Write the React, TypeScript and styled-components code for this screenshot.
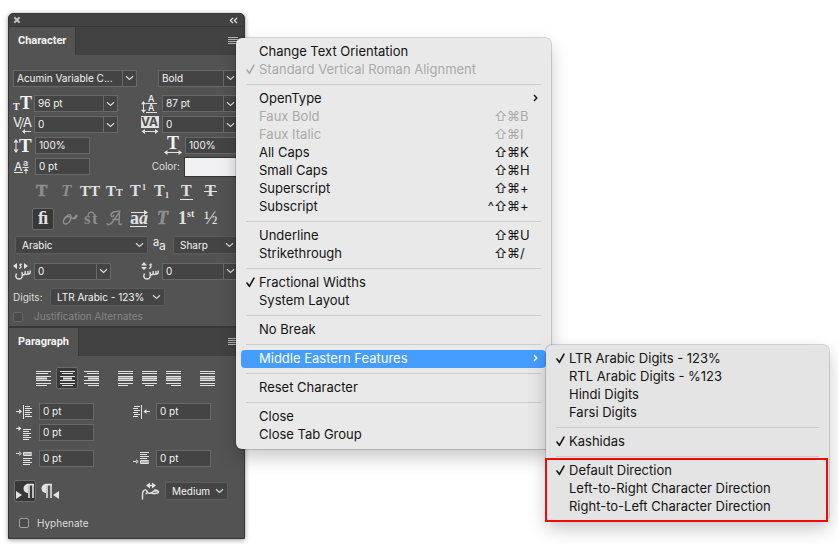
import React from "react";
import styled, { createGlobalStyle, css } from "styled-components";

const sans = `Inter, "Liberation Sans", sans-serif`;
const serif = `"Liberation Serif", serif`;
const ink = "#e2e2e2";
const dim = "#8e8e8e";

const GlobalStyle = createGlobalStyle`
  *, *::before, *::after { box-sizing: border-box; }
  body { margin: 0; background: #fff; font-family: ${sans}; }
  button, input, select { font: inherit; color: inherit; margin: 0; }
  svg { display: block; flex: none; overflow: visible; }
`;

const Page = styled.main`
  padding: 13px 8px 5px;
`;

const Dock = styled.div`
  position: relative;
  width: 28%;
  min-width: 237px;
  border: 1px solid #353535;
  border-radius: 5px 5px 0 0;
  background: #535353;
  color: #f4f4f4;
  font-size: 10px;
  line-height: 15px;
  box-shadow: 0 1px 5px rgba(0, 0, 0, 0.4);
`;

const TitleBar = styled.header`
  display: flex;
  align-items: center;
  justify-content: space-between;
  height: 13px;
  padding: 0 6px 0 4px;
  background: #424242;
  border-bottom: 1px solid #383838;
  border-radius: 4px 4px 0 0;
`;

const BareButton = styled.button`
  display: flex;
  padding: 0;
  border: 0;
  background: none;
`;

const Panel = styled.section`
  & + & { border-top: 2px solid #383838; }
`;

const TabRow = styled.div`
  display: flex;
  align-items: center;
  justify-content: space-between;
  height: 28px;
  padding-right: 6px;
  background: #424242;
`;

const Tab = styled.h2`
  align-self: stretch;
  display: flex;
  align-items: center;
  margin: 0;
  padding: 0 9px 1px;
  border-right: 1px solid #3a3a3a;
  background: #535353;
  font: 700 11px/15px Roboto, sans-serif;
`;

const CharacterBody = styled.div`
  padding: 10px 6px 3px 4px;
`;

const ParagraphBody = styled.div`
  padding: 8px 6px 5px 7px;
`;

const Row = styled.div<{ $h: number; $mt?: number; $split?: number; $pad?: number }>`
  display: ${(p) => (p.$split ? "grid" : "flex")};
  grid-template-columns: ${(p) => p.$split}px 1fr;
  align-items: center;
  height: ${(p) => p.$h}px;
  margin-top: ${(p) => p.$mt ?? 0}px;
  padding-left: ${(p) => p.$pad ?? 0}px;
`;

const Cell = styled.div<{ $lead: number; $end?: boolean }>`
  display: grid;
  grid-template-columns: ${(p) => p.$lead}px minmax(0, 1fr);
  align-items: center;
  & > :first-child { justify-self: ${(p) => (p.$end ? "end" : "start")}; }
`;

const Box = styled.span<{ $w?: number }>`
  display: flex;
  width: ${(p) => (p.$w ? `${p.$w}px` : "auto")};
  height: 17px;
  border: 1px solid #686868;
  background: #444;
`;

const TextInput = styled.input`
  flex: 1;
  min-width: 0;
  width: 100%;
  padding: 0 3px;
  border: 0;
  background: none;
  line-height: 15px;
`;

const DropButton = styled(BareButton)`
  align-items: center;
  justify-content: center;
  width: 14px;
  border-left: 1px solid #686868;
`;

const SelectBox = styled.span<{ $w?: number }>`
  display: grid;
  align-items: center;
  width: ${(p) => (p.$w ? `${p.$w}px` : "auto")};
  height: 18px;
  border: 1px solid #5c5c5c;
  border-radius: 2px;
  background: #444;
  & > * { grid-area: 1 / 1; }
  & > svg { justify-self: end; margin-right: 3px; pointer-events: none; }
`;

const NativeSelect = styled.select`
  appearance: none;
  width: 100%;
  height: 16px;
  padding: 0 0 0 6px;
  border: 0;
  background: none;
  line-height: 16px;
`;

const Label = styled.label<{ $off?: boolean }>`
  color: ${(p) => (p.$off ? "#858585" : "#dcdcdc")};
`;

const ColorLabel = styled(Label)`
  padding-right: 4px;
`;

const Swatch = styled.button`
  height: 20px;
  padding: 0;
  border: 1px solid #333;
  background: #f1f1f4;
`;

const CheckInput = styled.input<{ $off?: boolean }>`
  appearance: none;
  width: 10px;
  height: 10px;
  border: 1px solid ${(p) => (p.$off ? "#666" : "#a0a0a0")};
  border-radius: 2px;
  background: #4a4a4a;
`;

const ButtonGroup = styled.div`
  display: flex;
  gap: 2px;
  & + & { margin-left: 12px; }
`;

const Toggle = styled.button<{ $on?: boolean; $off?: boolean }>`
  display: flex;
  align-items: center;
  justify-content: center;
  width: 22px;
  height: 22px;
  padding: 0;
  border: 1px solid ${(p) => (p.$on ? "#6b6b6b" : "transparent")};
  border-radius: 2px;
  background: ${(p) => (p.$on ? "#383838" : "transparent")};
  color: ${(p) => (p.$off ? dim : ink)};
`;

const IconPad = styled.span`
  padding-right: 3px;
`;

const DirectionRow = styled.div`
  display: grid;
  grid-template-columns: 127px 1fr;
  align-items: center;
  height: 28px;
  margin: 6px 0 0 -2px;
`;

/* Menus */

const MenuList = styled.ul<{ $width: number }>`
  position: absolute;
  z-index: 2;
  min-width: ${(p) => p.$width}px;
  margin: 0;
  padding: 5px;
  border-radius: 6px;
  background: #e9e9e9;
  color: #141414;
  list-style: none;
  font-size: 13px;
  line-height: 16px;
  white-space: nowrap;
  box-shadow: 0 0 0 1px rgba(0, 0, 0, 0.15), 0 8px 18px rgba(0, 0, 0, 0.22);
`;

const MainMenu = styled(MenuList)`
  top: 24px;
  left: calc(100% - 8px);
`;

const SubMenu = styled(MenuList)`
  top: -5px;
  left: 100%;
  background: #e4e4e4;
`;

const MenuRow = styled.li`
  position: relative;
`;

const MenuButton = styled.button<{ $active?: boolean }>`
  display: grid;
  grid-template-columns: 18px 1fr auto;
  align-items: center;
  width: 100%;
  height: 18px;
  padding: 0 0 2px;
  border: 0;
  border-radius: 4px;
  background: none;
  text-align: left;
  &:disabled { color: #a9a9a9; }
  ${(p) => p.$active && css`background: #459dff; color: #fff;`}
`;

const CheckSlot = styled.span`
  padding-left: 5px;
`;

const Keys = styled.kbd`
  display: grid;
  grid-auto-flow: column;
  grid-auto-columns: 13px;
  padding-right: 13px;
  font-family: ${sans};
  & > span:nth-last-child(4) { text-align: right; }
`;

const Arrow = styled.span`
  padding-right: 8px;
`;

const Divider = styled.li`
  height: 1px;
  margin: 5px;
  background: #cbcbcb;
`;

const MarkedGroup = styled.li`
  position: relative;
  &::after {
    content: "";
    position: absolute;
    inset: -4px -4px -6px -6px;
    border: 2px solid #f20a0a;
    pointer-events: none;
  }
`;

const PlainList = styled.ul`
  margin: 0;
  padding: 0;
  list-style: none;
`;

/* Small drawings */

type IconProps = { w: number; h: number; children: React.ReactNode };
const Icon = ({ w, h, children }: IconProps) => (
  <svg width={w} height={h} viewBox={`0 0 ${w} ${h}`} fill="none" stroke="none" aria-hidden="true">
    {children}
  </svg>
);

type GlyphProps = {
  x: number; y: number; size: number; children: string;
  family?: string; weight?: number; italic?: boolean; color?: string; heavy?: boolean;
};
const Glyph = ({ x, y, size, children, family = serif, weight = 700, italic, color = "currentColor", heavy }: GlyphProps) => (
  <text
    x={x} y={y} fontSize={size} fontFamily={family} fontWeight={weight}
    fontStyle={italic ? "italic" : "normal"} fill={color} stroke={heavy ? color : "none"} strokeWidth="0.6"
  >
    {children}
  </text>
);

const Chevron = () => (
  <Icon w={9} h={6}><path d="M1 1.2 4.5 4.4 8 1.2" stroke="#d8d8d8" strokeWidth="1.2" /></Icon>
);
const Tick = () => (
  <Icon w={9} h={11}><path d="M1 6 3.4 9.3 8 1.2" stroke="currentColor" strokeWidth="1.6" strokeLinecap="round" strokeLinejoin="round" /></Icon>
);
const MenuArrow = () => (
  <Icon w={5} h={8}><path d="M1 1 3.8 4 1 7" stroke="currentColor" strokeWidth="1.4" /></Icon>
);
const CloseIcon = () => (
  <Icon w={8} h={8}><path d="M1.4 1.4 6.6 6.6M6.6 1.4 1.4 6.6" stroke="#c9c9c9" strokeWidth="2" /></Icon>
);
const CollapseIcon = () => (
  <Icon w={9} h={7}><path d="M4 1 1.3 3.5 4 6M8 1 5.3 3.5 8 6" stroke="#dcdcdc" strokeWidth="1.2" /></Icon>
);
const PanelMenuIcon = () => (
  <Icon w={10} h={8}><path d="M0 .5h10M0 2.5h10M0 4.5h10M0 6.5h10" stroke="#b5b5b5" /></Icon>
);

const SizeIcon = () => (
  <Icon w={18} h={16}><Glyph x={0} y={14} size={10}>T</Glyph><Glyph x={7} y={13} size={18}>T</Glyph></Icon>
);
const LeadingIcon = () => (
  <Icon w={18} h={18}>
    <Glyph x={7} y={7} size={9} family={sans} weight={500}>A</Glyph>
    <Glyph x={7} y={16} size={9} family={sans} weight={500}>A</Glyph>
    <path d="M5 8.5h11M5 17.5h11M2.5 8v8" stroke={ink} />
    <path d="M2.5 6 5 9.2H0zM2.5 18 5 14.8H0z" fill={ink} />
  </Icon>
);
const KerningIcon = () => (
  <Icon w={19} h={18}>
    <Glyph x={0} y={11} size={13} family={sans} weight={400}>V</Glyph>
    <Glyph x={10} y={11} size={13} family={sans} weight={400}>A</Glyph>
    <path d="M7 13 11 2M11 15.5h7" stroke={ink} />
    <path d="M9 15.5 12 13v5z" fill={ink} />
  </Icon>
);
const TrackingIcon = () => (
  <Icon w={18} h={18}>
    <rect width="18" height="12" fill={ink} />
    <Glyph x={0} y={10} size={12} family={sans} weight={700} color="#4c4c4c">VA</Glyph>
    <path d="M3 15.5h12" stroke={ink} />
    <path d="M.5 15.5 4 13v5zM17.5 15.5 14 13v5z" fill={ink} />
  </Icon>
);
const VerticalScaleIcon = () => (
  <Icon w={19} h={16}>
    <path d="M3 3v10" stroke={ink} />
    <path d="M3 1 5.5 4.5H.5zM3 15 5.5 11.5H.5z" fill={ink} />
    <Glyph x={6} y={14} size={19}>T</Glyph>
  </Icon>
);
const HorizontalScaleIcon = () => (
  <Icon w={18} h={18}>
    <Glyph x={3} y={12} size={18}>T</Glyph>
    <path d="M2 15.5h14" stroke={ink} />
    <path d="M0 15.5 3.5 13v5zM18 15.5 14.5 13v5z" fill={ink} />
  </Icon>
);
const BaselineIcon = () => (
  <Icon w={17} h={16}>
    <Glyph x={1} y={12} size={12} family={sans} weight={400}>A</Glyph>
    <Glyph x={10} y={7} size={9} family={sans} weight={500}>a</Glyph>
    <path d="M1 13.5h9M9.5 8.5h6M13 11v4" stroke={ink} />
    <path d="M13 9 15.5 12h-5z" fill={ink} />
  </Icon>
);
const SeenBase = () => (
  <path
    d="M3.5 11.5c-1.5 3-.3 5.5 2.5 5.5 3 0 4-2.5 3-6.5.3 3 3 3 3.200.5V9.500v1.500c.3 2 2.500 2 2.800 0V9.500v1.500c.3 1.800 2 1.500 2.200-.5V8.500"
    stroke={ink} strokeWidth="1.4" strokeLinejoin="round"
  />
);
const KashidaWidthIcon = () => (
  <Icon w={18} h={18}>
    <SeenBase />
    <path d="M0 4 4 1v6zM15 4 11 1v6z" fill={ink} />
    <path d="M9 2.5c-2-1.2-3 1-1 1.5.3 1-.5 2-2 2.5" stroke={ink} strokeWidth="1.2" />
  </Icon>
);
const KashidaHeightIcon = () => (
  <Icon w={18} h={18}>
    <SeenBase />
    <path d="M0 3.5 3 0l3 3.5zM0 5 3 8l3-3z" fill={ink} />
    <path d="M11 2.5c-2-1.2-3 1-1 1.5.3 1-.5 2-2 2.5" stroke={ink} strokeWidth="1.2" />
  </Icon>
);
const KashidaIcon = () => (
  <Icon w={19} h={18}>
    <path d="M1.5 17.5V12c0-3.500 2.500-5 4-3.500S6 12 4.500 11.500M5.500 8.500c.5 2.500 2.500 3 4.500 2.500 2.500-.8 3-3 4.500-3s1.500 1.500 3 1.500" stroke={ink} strokeWidth="1.4" />
    <path d="M10 10.5c0 1.500 7.500 1.500 7.500-.5 0-1.500-2.500-2-4-.3" stroke={ink} strokeWidth="1.4" />
    <path d="M8 3.5h5" stroke={ink} strokeWidth="1.5" />
    <path d="M5 3.5 9 .5v6zM15 3.5 11 .5v6z" fill={ink} />
  </Icon>
);
const AliasIcon = () => (
  <Icon w={15} h={14}>
    <Glyph x={0} y={8} size={11} family={sans} weight={400}>a</Glyph>
    <Glyph x={6} y={12} size={12} family={sans} weight={400}>a</Glyph>
  </Icon>
);

type Bar = [number, number];
const barRows = [0, 2, 5, 7, 9, 12, 14];
const Bars = ({ bars }: { bars: Bar[] }) => (
  <Icon w={15} h={15}>
    {bars.map(([x, w], i) => (
      <rect key={i} x={x} y={barRows[i]} width={w} height="1" fill={ink} />
    ))}
    <rect x={bars[3][0]} y="5" width={bars[3][1]} height="5" fill={ink} opacity="0.5" />
  </Icon>
);
const full: Bar = [0, 15];
const alignments: { name: string; bars: Bar[]; on?: boolean }[][] = [
  [
    { name: "Left align", bars: [full, [0, 12], full, [0, 11], full, full, [0, 11]] },
    { name: "Center", bars: [full, [2, 11], full, [3, 9], full, full, [2, 11]], on: true },
    { name: "Right align", bars: [full, [3, 12], full, [4, 11], full, full, [4, 11]] },
  ],
  [
    { name: "Justify last left", bars: [full, full, full, full, full, full, [0, 10]] },
    { name: "Justify last centered", bars: [full, full, full, full, full, full, [3, 9]] },
    { name: "Justify last right", bars: [full, full, full, full, full, full, [5, 10]] },
  ],
  [{ name: "Justify all", bars: [full, full, full, full, full, full, full] }],
];

const IndentLeftIcon = () => (
  <Icon w={17} h={14}>
    <path d="M0 6.5h4M7.5 0v14M9 1.5h5M9 3.5h7M9 5.5h5M9 7.5h7M9 9.5h5M9 11.5h7" stroke={ink} />
    <path d="M6 6.5 3 4v5z" fill={ink} />
  </Icon>
);
const IndentRightIcon = () => (
  <Icon w={17} h={14}>
    <path d="M13 6.5h4M8.5 0v14M1 1.5h6M0 3.5h5M1 5.5h6M0 7.5h5M1 9.5h6M0 11.5h5" stroke={ink} />
    <path d="M10.5 6.5 13.5 4v5z" fill={ink} />
  </Icon>
);
const FirstLineIcon = () => (
  <Icon w={17} h={14}>
    <path d="M0 2.5h3M7 3.5h8M7 5.5h6M7 7.5h8M7 9.5h6M7 11.5h8M7 13.5h6" stroke={ink} />
    <path d="M5.5 2.5 2.5 0v5z" fill={ink} />
  </Icon>
);
const SpaceBeforeIcon = () => (
  <Icon w={17} h={14}>
    <path d="M0 2.5h3M7.5 1.5h8v3h-8zM7 7.5h9M7 9.5h7M7 11.5h9M7 13.5h7" stroke={ink} />
    <path d="M6 2.5 3 0v5zM8 2h8v2H8z" fill="#b0b0b0" />
  </Icon>
);
const SpaceAfterIcon = () => (
  <Icon w={17} h={14}>
    <path d="M0 10.5h3M7 1.5h9M7 3.5h7M7 5.5h9M7 7.5h7M7.5 9.5h8v3h-8z" stroke={ink} />
    <path d="M6 10.5 3 8v5zM8 10h8v2H8z" fill="#b0b0b0" />
  </Icon>
);
const PilcrowIcon = ({ rtl }: { rtl?: boolean }) => (
  <Icon w={19} h={15}>
    <path d={rtl ? "M6 0a4.5 4.5 0 0 0 0 9zM19 7v8L13 11z" : "M12 0a4.5 4.5 0 0 0 0 9zM0 7v8l6-4z"} fill={ink} />
    <path d={rtl ? "M5 .6h7M7 0v14M11 0v14" : "M11 .6h7M13 0v14M17 0v14"} stroke={ink} strokeWidth="1.6" />
  </Icon>
);

const typeStyles: { name: string; off?: boolean; art: React.ReactNode }[] = [
  { name: "Faux bold", off: true, art: <Glyph x={4} y={14} size={17} heavy>T</Glyph> },
  { name: "Faux italic", off: true, art: <Glyph x={5} y={14} size={17} italic>T</Glyph> },
  { name: "All caps", art: <Glyph x={0} y={14} size={15}>TT</Glyph> },
  { name: "Small caps", art: <><Glyph x={2} y={14} size={15}>T</Glyph><Glyph x={12} y={14} size={10}>T</Glyph></> },
  { name: "Superscript", art: <><Glyph x={2} y={14} size={16}>T</Glyph><Glyph x={14} y={8} size={8}>1</Glyph></> },
  { name: "Subscript", art: <><Glyph x={2} y={14} size={16}>T</Glyph><Glyph x={13} y={16} size={8}>1</Glyph></> },
  { name: "Underline", art: <><Glyph x={5} y={14} size={16}>T</Glyph><path d="M4 17.5h13" stroke={ink} /></> },
  { name: "Strikethrough", art: <><Glyph x={5} y={14} size={16}>T</Glyph><path d="M4 9.5h13" stroke={ink} /></> },
];
const openTypeStyles: { name: string; off?: boolean; on?: boolean; art: React.ReactNode }[] = [
  { name: "Standard ligatures", on: true, art: <Glyph x={5} y={15} size={18}>ﬁ</Glyph> },
  {
    name: "Contextual alternates", off: true,
    art: <path d="M8 15c-4-1 0-9 4-7.500s0 8-4 7.500M10 9c-1-4 5-5 4 0 1 1 4 .5 5-2.500.500-1.500 2.500 1.500-2 3.500" stroke={dim} strokeWidth="1.4" />,
  },
  {
    name: "Discretionary ligatures", off: true,
    art: <><Glyph x={3} y={15} size={17}>s</Glyph><Glyph x={11} y={15} size={17}>t</Glyph><path d="M7 7c0-5 6-5 6-1" stroke={dim} strokeWidth="1.2" /></>,
  },
  {
    name: "Swash", off: true,
    art: <path d="M2 14c0 2.500 3.500 2 5.500-1L14.500 3 14 15c1 1 2.500.5 3-.5M7.500 10.500h7M15.500 2.500C11 1.500 5.500 3.500 6 6.500c.5 2 3.500.5 2.500-.8" stroke={dim} strokeWidth="1.4" />,
  },
  {
    name: "Stylistic alternates",
    art: <><Glyph x={1} y={15} size={18}>a</Glyph><Glyph x={10} y={15} size={18} italic>a</Glyph><path d="M2 3.5h14M1 17.5h17" stroke={ink} /><path d="M19 3.5 15 1v5z" fill={ink} /></>,
  },
  { name: "Titling alternates", off: true, art: <Glyph x={4} y={15} size={18} italic heavy>T</Glyph> },
  { name: "Ordinals", art: <><Glyph x={1} y={15} size={18}>1</Glyph><Glyph x={10} y={8} size={10}>st</Glyph></> },
  { name: "Fractions", art: <Glyph x={3} y={15} size={18} weight={400}>½</Glyph> },
];

/* Composite controls */

type FieldProps = { name: string; value: string; w?: number; drop?: boolean };
const Field = ({ name, value, w, drop }: FieldProps) => (
  <Box $w={w}>
    <TextInput aria-label={name} defaultValue={value} />
    {drop && <DropButton aria-label={`${name} options`}><Chevron /></DropButton>}
  </Box>
);

type PickerProps = { id: string; name: string; value: string; w?: number };
const Picker = ({ id, name, value, w }: PickerProps) => (
  <SelectBox $w={w}>
    <NativeSelect id={id} aria-label={name} defaultValue={value}><option>{value}</option></NativeSelect>
    <Chevron />
  </SelectBox>
);

type ItemProps = { label: string; keys?: string; checked?: boolean; off?: boolean; active?: boolean; children?: React.ReactNode; more?: boolean };
const Item = ({ label, keys, checked, off, active, more, children }: ItemProps) => (
  <MenuRow role="none">
    <MenuButton role="menuitem" disabled={off} $active={active} aria-haspopup={more ? "menu" : undefined}>
      <CheckSlot>{checked && <Tick />}</CheckSlot>
      <span>{label}</span>
      {keys && <Keys>{[...keys].map((k) => <span key={k}>{k}</span>)}</Keys>}
      {more && <Arrow><MenuArrow /></Arrow>}
    </MenuButton>
    {children}
  </MenuRow>
);

const MiddleEasternMenu = () => (
  <SubMenu role="menu" aria-label="Middle Eastern Features" $width={283}>
    <Item label="LTR Arabic Digits - 123%" checked />
    <Item label="RTL Arabic Digits - %123" />
    <Item label="Hindi Digits" />
    <Item label="Farsi Digits" />
    <Divider role="separator" />
    <Item label="Kashidas" checked />
    <Divider role="separator" />
    <MarkedGroup role="none">
      <PlainList role="group">
        <Item label="Default Direction" checked />
        <Item label="Left-to-Right Character Direction" />
        <Item label="Right-to-Left Character Direction" />
      </PlainList>
    </MarkedGroup>
  </SubMenu>
);

const PanelMenu = () => (
  <MainMenu role="menu" aria-label="Character panel menu" $width={315}>
    <Item label="Change Text Orientation" />
    <Item label="Standard Vertical Roman Alignment" checked off />
    <Divider role="separator" />
    <Item label="OpenType" more />
    <Item label="Faux Bold" keys="⇧⌘B" off />
    <Item label="Faux Italic" keys="⇧⌘I" off />
    <Item label="All Caps" keys="⇧⌘K" />
    <Item label="Small Caps" keys="⇧⌘H" />
    <Item label="Superscript" keys="⇧⌘+" />
    <Item label="Subscript" keys="^⇧⌘+" />
    <Divider role="separator" />
    <Item label="Underline" keys="⇧⌘U" />
    <Item label="Strikethrough" keys="⇧⌘/" />
    <Divider role="separator" />
    <Item label="Fractional Widths" checked />
    <Item label="System Layout" />
    <Divider role="separator" />
    <Item label="No Break" />
    <Divider role="separator" />
    <Item label="Middle Eastern Features" active more><MiddleEasternMenu /></Item>
    <Divider role="separator" />
    <Item label="Reset Character" />
    <Divider role="separator" />
    <Item label="Close" />
    <Item label="Close Tab Group" />
  </MainMenu>
);

const CharacterPanel = () => (
  <Panel>
    <TabRow>
      <Tab>Character</Tab>
      <BareButton aria-label="Character menu"><PanelMenuIcon /></BareButton>
    </TabRow>
    <CharacterBody>
      <Row $h={26} $split={145}>
        <Field name="Font family" value="Acumin Variable C..." w={124} drop />
        <Field name="Font style" value="Bold" drop />
      </Row>
      <Row $h={21} $mt={2} $split={128}>
        <Cell $lead={21}><SizeIcon /><Field name="Font size" value="96 pt" w={84} drop /></Cell>
        <Cell $lead={21}><LeadingIcon /><Field name="Leading" value="87 pt" drop /></Cell>
      </Row>
      <Row $h={21} $split={128}>
        <Cell $lead={21}><KerningIcon /><Field name="Kerning" value="0" w={84} drop /></Cell>
        <Cell $lead={21}><TrackingIcon /><Field name="Tracking" value="0" drop /></Cell>
      </Row>
      <Row $h={21} $split={128}>
        <Cell $lead={22}><VerticalScaleIcon /><Field name="Vertical scale" value="100%" w={55} /></Cell>
        <Cell $lead={44} $end>
          <IconPad><HorizontalScaleIcon /></IconPad>
          <Field name="Horizontal scale" value="100%" />
        </Cell>
      </Row>
      <Row $h={21} $split={128}>
        <Cell $lead={22}><BaselineIcon /><Field name="Baseline shift" value="0 pt" w={55} /></Cell>
        <Cell $lead={43} $end><ColorLabel htmlFor="color">Color:</ColorLabel><Swatch id="color" /></Cell>
      </Row>
      <Row $h={27} $mt={1} $pad={18}>
        <ButtonGroup>
          {typeStyles.map((s) => (
            <Toggle key={s.name} aria-label={s.name} $off={s.off}><Icon w={20} h={20}>{s.art}</Icon></Toggle>
          ))}
        </ButtonGroup>
      </Row>
      <Row $h={27} $pad={19}>
        <ButtonGroup>
          {openTypeStyles.map((s) => (
            <Toggle key={s.name} aria-label={s.name} $off={s.off} $on={s.on}><Icon w={20} h={20}>{s.art}</Icon></Toggle>
          ))}
        </ButtonGroup>
      </Row>
      <Row $h={26} $split={138} $pad={2}>
        <Picker id="language" name="Language" value="Arabic" w={133} />
        <Cell $lead={20}><AliasIcon /><Picker id="alias" name="Anti-aliasing" value="Sharp" /></Cell>
      </Row>
      <Row $h={26} $split={128}>
        <Cell $lead={21}><KashidaWidthIcon /><Field name="Diacritic width" value="0" w={77} drop /></Cell>
        <Cell $lead={21}><KashidaHeightIcon /><Field name="Diacritic height" value="0" drop /></Cell>
      </Row>
      <Row $h={26}>
        <Cell $lead={37}><Label htmlFor="digits">Digits:</Label><Picker id="digits" name="Digits" value="LTR Arabic - 123%" w={115} /></Cell>
      </Row>
      <Row $h={13}>
        <Cell $lead={21}><CheckInput id="justalt" type="checkbox" disabled $off /><Label htmlFor="justalt" $off>Justification Alternates</Label></Cell>
      </Row>
    </CharacterBody>
  </Panel>
);

const ParagraphPanel = () => (
  <Panel>
    <TabRow>
      <Tab>Paragraph</Tab>
      <BareButton aria-label="Paragraph menu"><PanelMenuIcon /></BareButton>
    </TabRow>
    <ParagraphBody>
      <Row $h={28} $pad={16}>
        {alignments.map((group, i) => (
          <ButtonGroup key={i}>
            {group.map((a) => (
              <Toggle key={a.name} aria-label={a.name} $on={a.on}><Bars bars={a.bars} /></Toggle>
            ))}
          </ButtonGroup>
        ))}
      </Row>
      <Row $h={21} $mt={9} $split={117}>
        <Cell $lead={23}><IndentLeftIcon /><Field name="Indent left margin" value="0 pt" w={55} /></Cell>
        <Cell $lead={23}><IndentRightIcon /><Field name="Indent right margin" value="0 pt" w={55} /></Cell>
      </Row>
      <Row $h={21} $split={117}>
        <Cell $lead={23}><FirstLineIcon /><Field name="Indent first line" value="0 pt" w={55} /></Cell>
      </Row>
      <Row $h={26} $mt={2} $split={117}>
        <Cell $lead={23}><SpaceBeforeIcon /><Field name="Space before" value="0 pt" w={55} /></Cell>
        <Cell $lead={23}><SpaceAfterIcon /><Field name="Space after" value="0 pt" w={55} /></Cell>
      </Row>
      <DirectionRow>
        <ButtonGroup>
          <Toggle aria-label="Left-to-right paragraph" $on><PilcrowIcon /></Toggle>
          <Toggle aria-label="Right-to-left paragraph"><PilcrowIcon rtl /></Toggle>
        </ButtonGroup>
        <Cell $lead={24}><KashidaIcon /><Picker id="kashida" name="Kashida" value="Medium" w={63} /></Cell>
      </DirectionRow>
      <Row $h={20} $mt={8} $pad={3}>
        <Cell $lead={18}><CheckInput id="hyphenate" type="checkbox" /><Label htmlFor="hyphenate">Hyphenate</Label></Cell>
      </Row>
    </ParagraphBody>
  </Panel>
);

export default function App() {
  return (
    <>
      <GlobalStyle />
      <Page>
        <Dock>
          <TitleBar>
            <BareButton aria-label="Close panel"><CloseIcon /></BareButton>
            <BareButton aria-label="Collapse panel"><CollapseIcon /></BareButton>
          </TitleBar>
          <CharacterPanel />
          <ParagraphPanel />
          <PanelMenu />
        </Dock>
      </Page>
    </>
  );
}
